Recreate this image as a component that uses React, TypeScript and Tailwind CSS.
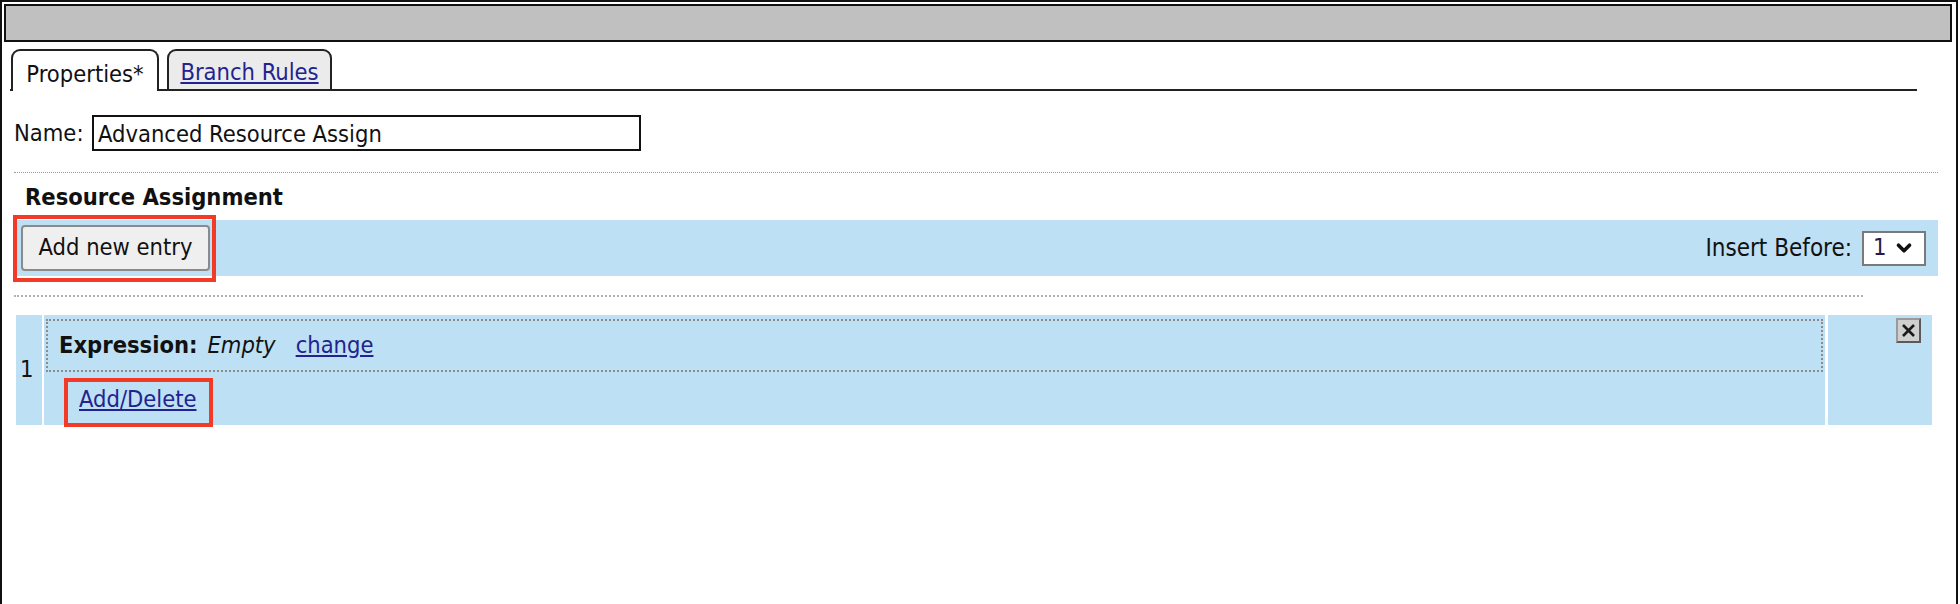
import React from "react";
import { ChevronDown } from "lucide-react";

// red annotation frame drawn over a control
const Mark: React.FC<{ className: string }> = ({ className }) => (
  <span
    className={`pointer-events-none absolute border-4 border-[#f33a26] ${className}`}
  />
);

const CloseBox = () => (
  <div className="flex h-[25px] w-[25px] items-center justify-center border-2 border-t-[#9a9a9a] border-l-[#9a9a9a] border-r-[#5a5a5a] border-b-[#5a5a5a] bg-[#cfcfcf]">
    <svg width="15" height="15" viewBox="0 0 15 15">
      <path d="M2 2 L13 13 M13 2 L2 13" stroke="#1a1a1a" strokeWidth="2.6" />
    </svg>
  </div>
);

export default function App() {
  return (
    <div className="h-[604px] w-[1960px] overflow-hidden bg-white font-['DejaVu_Sans_Condensed','Liberation_Sans',sans-serif] text-[23.5px] text-[#111]">
      <div className="h-[640px] w-[1958px] border-2 border-[#111] pl-[2px] pr-[4px] pt-[2px]">
        {/* title bar */}
        <div className="h-[38px] border-2 border-[#111] bg-[#c0c0c0]" />

        <div className="ml-[10px] mr-[14px]">
          {/* tabs */}
          <div className="mr-[21px] -ml-[4px] mt-[7px] flex h-[42px] items-end">
            <div className="h-full w-[1px] border-b-2 border-[#222]" />
            <div className="flex h-full w-[148px] items-center justify-center rounded-t-[9px] border-2 border-b-0 border-[#222] bg-white pt-[7px]">
              Properties*
            </div>
            <div className="h-full w-[8px] border-b-2 border-[#222]" />
            <div className="flex h-full w-[165px] items-center justify-center rounded-t-[9px] border-2 border-[#222] bg-[#ebebeb] pt-[5px]">
              <a className="cursor-pointer text-[#23238f] underline underline-offset-2">
                Branch Rules
              </a>
            </div>
            <div className="h-full flex-1 border-b-2 border-[#222]" />
          </div>

          {/* name */}
          <div className="mt-[24px] flex h-[36px] items-center">
            <label className="w-[78px] leading-[36px]">Name:</label>
            <input
              className="h-[36px] w-[549px] border-2 border-[#111] px-[4px] pt-[2px] text-[23.5px] outline-none"
              defaultValue="Advanced Resource Assign"
            />
          </div>

          <div className="mt-[21px] border-t border-dotted border-[#9a9a9a]" />

          <div className="flex h-[47px] items-center pl-[11px] pt-[2px] font-bold">
            Resource Assignment
          </div>

          {/* toolbar */}
          <div className="flex h-[56px] items-center justify-between bg-[#bde0f4] pl-[7px] pr-[12px]">
            <div className="relative">
              <button className="h-[46px] w-[189px] rounded-[4px] border-2 border-[#8a8a8a] bg-[#efefef] text-[23.5px] text-[#111]">
                Add new entry
              </button>
              <Mark className="-bottom-[11px] -left-[8px] -right-[6px] -top-[10px]" />
            </div>
            <div className="flex items-center gap-[10px]">
              <span className="text-[24px]">Insert Before:</span>
              <div className="flex h-[35px] w-[64px] items-center justify-between border-2 border-[#7a7a7a] bg-white pl-[9px] pr-[9px]">
                <span className="text-[#2a1a4a]">1</span>
                <ChevronDown size={22} strokeWidth={4} color="#111" />
              </div>
            </div>
          </div>

          <div className="mt-[19px] w-[1849px] border-t-2 border-dotted border-[#b4b4b4]" />

          {/* entry */}
          <div className="ml-[2px] mr-[6px] mt-[18px] flex h-[110px] gap-[2px]">
            <div className="flex w-[26px] items-center bg-[#bde0f4] pl-[4px]">
              1
            </div>
            <div className="flex-1 bg-[#bde0f4] px-[2px] pt-[4px]">
              <div className="flex h-[53px] items-center gap-[10px] border-2 border-dotted border-[#8c8c8c] pl-[11px]">
                <span className="font-bold">Expression:</span>
                <span className="italic">Empty</span>
                <a className="ml-[10px] cursor-pointer text-[#23238f] underline underline-offset-2">
                  change
                </a>
              </div>
              <div className="mt-[10px] pl-[33px]">
                <span className="relative inline-block leading-[28px]">
                  <a className="cursor-pointer text-[#23238f] underline underline-offset-2">
                    Add/Delete
                  </a>
                  <Mark className="-bottom-[14px] -left-[15px] -right-[16px] -top-[7px]" />
                </span>
              </div>
            </div>
            <div className="ml-[1px] flex w-[104px] justify-end bg-[#bde0f4] pr-[11px] pt-[3px]">
              <CloseBox />
            </div>
          </div>
        </div>
      </div>
    </div>
  );
}
